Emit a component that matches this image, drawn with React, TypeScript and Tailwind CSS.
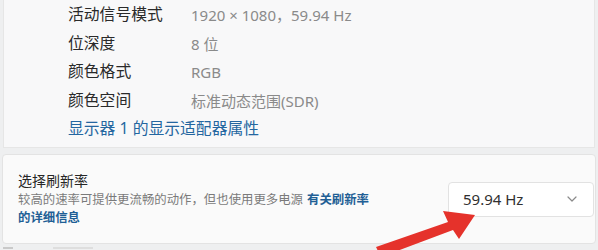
import React from 'react';

const rows = [
  { label: '活动信号模式', value: '1920 × 1080，59.94 Hz' },
  { label: '位深度', value: '8 位' },
  { label: '颜色格式', value: 'RGB' },
  { label: '颜色空间', value: '标准动态范围(SDR)' },
];

export default function App() {
  return (
    <div
      className="relative w-[598px] h-[250px] overflow-hidden bg-[#eeeff0]"
      style={{ fontFamily: '"Noto Sans", "Noto Sans CJK SC", sans-serif' }}
    >
      {/* Advanced display info panel */}
      <div className="mx-[3px] h-[148px] bg-[#f8f8f9] border-x border-b border-[#e6e6e6] pl-[64px] pt-px">
        {rows.map((r) => (
          <div key={r.label} className="flex items-center h-[28.5px]">
            <span className="w-[123px] text-[15.8px] text-[#2a2a2a]">{r.label}</span>
            <span className="text-[15px] text-[#8a8a8a]">{r.value}</span>
          </div>
        ))}
        <div className="flex items-center h-[28px] text-[15.8px] text-[#2466a0]">显示器 1 的显示适配器属性</div>
      </div>

      {/* Refresh rate card */}
      <div className="mt-[6px] mx-[2px] h-[90px] bg-[#fafafa] border border-[#e3e3e3] rounded-[4px] flex items-center pl-[15px] pr-px">
        <div className="flex-1">
          <div className="text-[14px] leading-[20px] text-[#262626]">选择刷新率</div>
          <div className="w-[360px] text-[12.4px] leading-[18px] text-[#7a7a7a]">
            较高的速率可提供更流畅的动作，但也使用更多电源
            <span className="ml-[4px] font-semibold text-[#1f5f95]">有关刷新率的详细信息</span>
          </div>
        </div>
        <div className="w-[146px] h-[35px] bg-white border border-[#e2e2e2] rounded-[4px] flex items-center justify-between pl-[14px] pr-[16px]">
          <span className="text-[15px] text-[#303030]">59.94 Hz</span>
          <svg width="10" height="6" viewBox="0 0 10 6" fill="none">
            <path d="M1 1l4 4 4-4" stroke="#8a8a8a" strokeWidth="1.2" strokeLinecap="round" strokeLinejoin="round" />
          </svg>
        </div>
      </div>

      <div className="mt-[3px] ml-[3px] flex gap-[40px]">
        <div className="w-[10px] h-[2px] bg-[#c9c9c9]" />
        <div className="w-[40px] h-[2px] bg-[#dedede]" />
      </div>

      {/* Red annotation arrow */}
      <svg className="absolute left-0 top-0" width="598" height="250" viewBox="0 0 598 250">
        <polygon
          points="376,247 448,222 443,211 475,215 459,239 453,230 381,257"
          fill="#e5322b"
        />
      </svg>
    </div>
  );
}
